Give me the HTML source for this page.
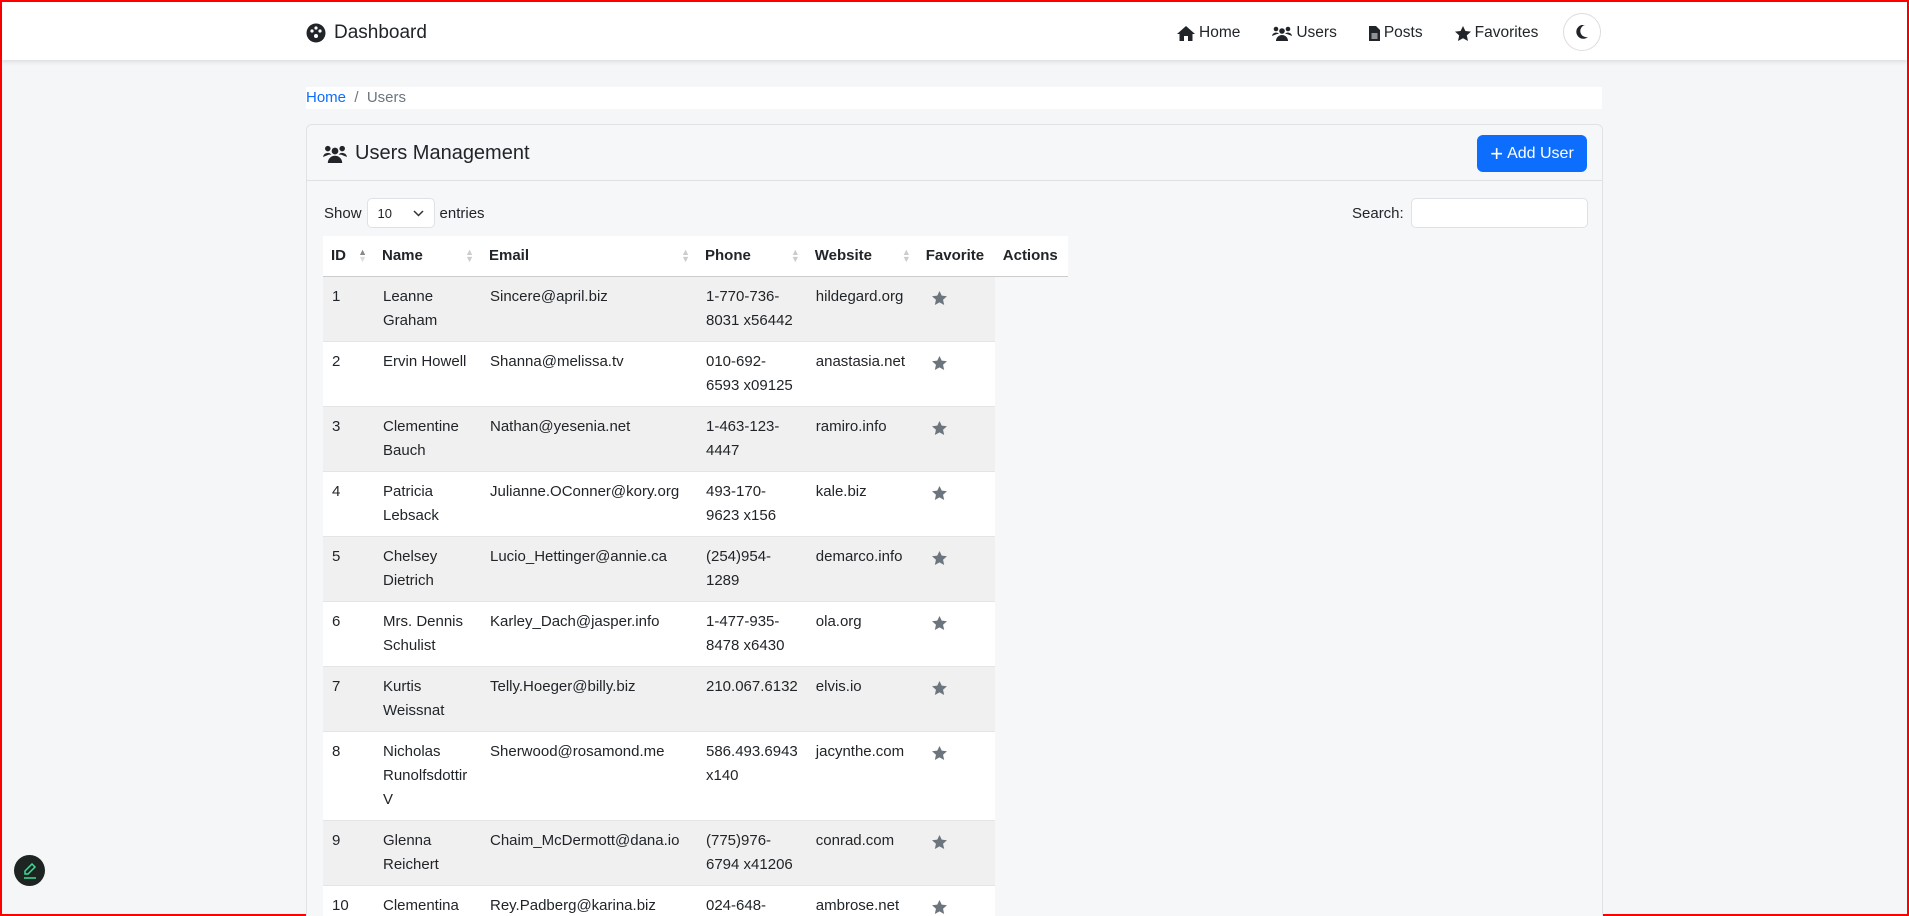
<!DOCTYPE html>
<html><head><meta charset="utf-8"><style>
*{box-sizing:border-box;margin:0;padding:0}
html,body{width:1909px;height:916px;overflow:hidden}
body{background:#f5f6f7;font-family:"Liberation Sans",sans-serif;color:#212529;position:relative;border:2px solid #f00}
.nav{position:absolute;left:0;top:0;width:1905px;height:58px;background:#fff;box-shadow:0 2px 4px rgba(0,0,0,.1)}
.brand{position:absolute;left:304px;top:20px;font-size:19px;display:flex;align-items:center;gap:8px}
.links{position:absolute;left:1175px;top:22px;display:flex;gap:32px;font-size:15.5px;align-items:center}
.links span{display:flex;align-items:center;gap:4px}
.moon{position:absolute;left:1561px;top:11px;width:38px;height:38px;border:1px solid #ddd;border-radius:50%;background:#fff;display:flex;align-items:center;justify-content:center}
.bc{position:absolute;left:304px;top:85px;width:1296px;height:22px;background:#fff;font-size:15px;line-height:22px;color:#6c757d}
.bc a{color:#0d6efd;text-decoration:none}
.card{position:absolute;left:304px;top:122px;width:1297px;height:800px;border:1px solid #e0e2e4;border-radius:6px;background:#f6f7f8}
.ch{height:56px;border-bottom:1px solid #dee2e6;position:relative}
.ch .t{position:absolute;left:16px;top:17px;font-size:20px;display:flex;align-items:center;gap:8px}
.btn{position:absolute;left:1170px;top:10px;width:110px;height:37px;background:#0d6efd;color:#fff;border-radius:6px;font-size:16px;display:flex;align-items:center;justify-content:center;gap:4px}
.show{position:absolute;left:17px;top:73px;font-size:15px;display:flex;align-items:center;gap:5px}
.sel{width:68px;height:30px;border:1px solid #dee2e6;border-radius:5px;background:#fff;font-size:13px;padding:7px 10px;position:relative}
.search{position:absolute;left:1045px;top:73px;font-size:15px;display:flex;align-items:center;gap:7px}
.search div{width:177px;height:30px;border:1px solid #dee2e6;border-radius:5px;background:#fff}
table{position:absolute;left:16px;top:111px;border-collapse:collapse;table-layout:fixed;font-size:15px}
th{background:#fff;height:40px;text-align:left;padding:0 8px;font-weight:bold;border-bottom:1px solid #ccc;position:relative}
th .s{position:absolute;right:7px;top:13px;color:#ccc;font-size:9px;line-height:7px}
td{padding:8px 9px;line-height:24px;vertical-align:top;border-bottom:1px solid #e5e5e5;background:#fff}
tr:nth-child(even) td{background:#f0f0f0}
.star{padding-left:14px;padding-top:12px}
.fab{position:absolute;left:12px;top:853px;width:31px;height:31px;border-radius:50%;background:#1d2421;display:flex;align-items:center;justify-content:center}
</style></head><body>
<div class="nav">
<div class="brand"><svg width="20" height="20" viewBox="0 0 20 20"><circle cx="10" cy="10" r="9.5" fill="#212529"/><circle cx="6" cy="8" r="1.6" fill="#fff"/><circle cx="10" cy="5" r="1.6" fill="#fff"/><circle cx="14" cy="8" r="1.6" fill="#fff"/><circle cx="10" cy="13" r="2" fill="#fff"/></svg>Dashboard</div>
<div class="links">
<span><svg width="18" height="15" viewBox="0 0 18 15"><path d="M9 0L0 8h2.5v7h4.5v-5h4v5h4.5V8H18z" fill="#212529"/></svg>Home</span>
<span><svg width="20" height="15" viewBox="0 0 20 15"><circle cx="4" cy="3" r="2.3" fill="#212529"/><circle cx="16" cy="3" r="2.3" fill="#212529"/><circle cx="10" cy="5" r="2.8" fill="#212529"/><path d="M0 10a4 4 0 0 1 7-2H5zM20 10a4 4 0 0 0-7-2h2zM4 15a6 6 0 0 1 12 0z" fill="#212529"/></svg>Users</span>
<span><svg width="11" height="15" viewBox="0 0 11 15"><path d="M0 0h7l4 4v11H0z" fill="#212529"/><path d="M2.5 8h6M2.5 10h6M2.5 12h6" stroke="#fff"/></svg>Posts</span>
<span><svg width="16" height="15" viewBox="0 0 16 15"><path d="M8 0l2.4 5 5.6.6-4.2 3.8 1.2 5.6L8 12.2 3 15l1.2-5.6L0 5.6 5.6 5z" fill="#212529"/></svg>Favorites</span>
</div>
<div class="moon"><svg width="12" height="14" viewBox="0 0 12 14"><path d="M9 0A7 7 0 1 0 12 12 6 6 0 0 1 9 0z" fill="#212529"/></svg></div>
</div>
<div class="bc"><a>Home</a> &nbsp;/&nbsp; Users</div>
<div class="card">
<div class="ch"><div class="t"><svg width="24" height="18" viewBox="0 0 20 15"><circle cx="4" cy="3" r="2.3" fill="#212529"/><circle cx="16" cy="3" r="2.3" fill="#212529"/><circle cx="10" cy="5" r="2.8" fill="#212529"/><path d="M0 10a4 4 0 0 1 7-2H5zM20 10a4 4 0 0 0-7-2h2zM4 15a6 6 0 0 1 12 0z" fill="#212529"/></svg>Users Management</div>
<div class="btn"><span style="font-size:22px;line-height:16px">+</span>Add User</div></div>
<div class="show">Show <div class="sel">10<svg style="position:absolute;right:10px;top:11px" width="11" height="7" viewBox="0 0 11 7"><path d="M1 1l4.5 4.5L10 1" stroke="#333" fill="none" stroke-width="1.5"/></svg></div> entries</div>
<div class="search">Search: <div></div></div>
<table>
<colgroup><col style="width:51px"><col style="width:107px"><col style="width:216px"><col style="width:109px"><col style="width:111px"><col style="width:77px"><col style="width:73px"></colgroup>
<tr><th>ID<span class="s" style="color:#888">▲<br><span style="color:#ddd">▼</span></span></th><th>Name<span class="s">▲<br>▼</span></th><th>Email<span class="s">▲<br>▼</span></th><th>Phone<span class="s">▲<br>▼</span></th><th>Website<span class="s">▲<br>▼</span></th><th>Favorite</th><th>Actions</th></tr>
<tr><td>1</td><td>Leanne Graham</td><td>Sincere@april.biz</td><td>1-770-736-8031 x56442</td><td>hildegard.org</td><td class="star"><svg width="15" height="14" viewBox="0 0 16 15"><path d="M8 0l2.4 5 5.6.6-4.2 3.8 1.2 5.6L8 12.2 3 15l1.2-5.6L0 5.6 5.6 5z" fill="#6c757d"/></svg></td></tr>
<tr><td>2</td><td>Ervin Howell</td><td>Shanna@melissa.tv</td><td>010-692-6593 x09125</td><td>anastasia.net</td><td class="star"><svg width="15" height="14" viewBox="0 0 16 15"><path d="M8 0l2.4 5 5.6.6-4.2 3.8 1.2 5.6L8 12.2 3 15l1.2-5.6L0 5.6 5.6 5z" fill="#6c757d"/></svg></td></tr>
<tr><td>3</td><td>Clementine Bauch</td><td>Nathan@yesenia.net</td><td>1-463-123-4447</td><td>ramiro.info</td><td class="star"><svg width="15" height="14" viewBox="0 0 16 15"><path d="M8 0l2.4 5 5.6.6-4.2 3.8 1.2 5.6L8 12.2 3 15l1.2-5.6L0 5.6 5.6 5z" fill="#6c757d"/></svg></td></tr>
<tr><td>4</td><td>Patricia Lebsack</td><td>Julianne.OConner@kory.org</td><td>493-170-9623 x156</td><td>kale.biz</td><td class="star"><svg width="15" height="14" viewBox="0 0 16 15"><path d="M8 0l2.4 5 5.6.6-4.2 3.8 1.2 5.6L8 12.2 3 15l1.2-5.6L0 5.6 5.6 5z" fill="#6c757d"/></svg></td></tr>
<tr><td>5</td><td>Chelsey Dietrich</td><td>Lucio_Hettinger@annie.ca</td><td>(254)954-1289</td><td>demarco.info</td><td class="star"><svg width="15" height="14" viewBox="0 0 16 15"><path d="M8 0l2.4 5 5.6.6-4.2 3.8 1.2 5.6L8 12.2 3 15l1.2-5.6L0 5.6 5.6 5z" fill="#6c757d"/></svg></td></tr>
<tr><td>6</td><td>Mrs. Dennis Schulist</td><td>Karley_Dach@jasper.info</td><td>1-477-935-8478 x6430</td><td>ola.org</td><td class="star"><svg width="15" height="14" viewBox="0 0 16 15"><path d="M8 0l2.4 5 5.6.6-4.2 3.8 1.2 5.6L8 12.2 3 15l1.2-5.6L0 5.6 5.6 5z" fill="#6c757d"/></svg></td></tr>
<tr><td>7</td><td>Kurtis Weissnat</td><td>Telly.Hoeger@billy.biz</td><td>210.067.6132</td><td>elvis.io</td><td class="star"><svg width="15" height="14" viewBox="0 0 16 15"><path d="M8 0l2.4 5 5.6.6-4.2 3.8 1.2 5.6L8 12.2 3 15l1.2-5.6L0 5.6 5.6 5z" fill="#6c757d"/></svg></td></tr>
<tr><td>8</td><td>Nicholas Runolfsdottir V</td><td>Sherwood@rosamond.me</td><td>586.493.6943 x140</td><td>jacynthe.com</td><td class="star"><svg width="15" height="14" viewBox="0 0 16 15"><path d="M8 0l2.4 5 5.6.6-4.2 3.8 1.2 5.6L8 12.2 3 15l1.2-5.6L0 5.6 5.6 5z" fill="#6c757d"/></svg></td></tr>
<tr><td>9</td><td>Glenna Reichert</td><td>Chaim_McDermott@dana.io</td><td>(775)976-6794 x41206</td><td>conrad.com</td><td class="star"><svg width="15" height="14" viewBox="0 0 16 15"><path d="M8 0l2.4 5 5.6.6-4.2 3.8 1.2 5.6L8 12.2 3 15l1.2-5.6L0 5.6 5.6 5z" fill="#6c757d"/></svg></td></tr>
<tr><td>10</td><td>Clementina DuBuque</td><td>Rey.Padberg@karina.biz</td><td>024-648-3804</td><td>ambrose.net</td><td class="star"><svg width="15" height="14" viewBox="0 0 16 15"><path d="M8 0l2.4 5 5.6.6-4.2 3.8 1.2 5.6L8 12.2 3 15l1.2-5.6L0 5.6 5.6 5z" fill="#6c757d"/></svg></td></tr>
</table>
</div>
<div class="fab"><svg width="14" height="16" viewBox="0 0 14 16"><path d="M9 1l3 3-7 7H2V8z M1 15h12" stroke="#3ddc97" fill="none" stroke-width="1.5"/></svg></div>
</body></html>
